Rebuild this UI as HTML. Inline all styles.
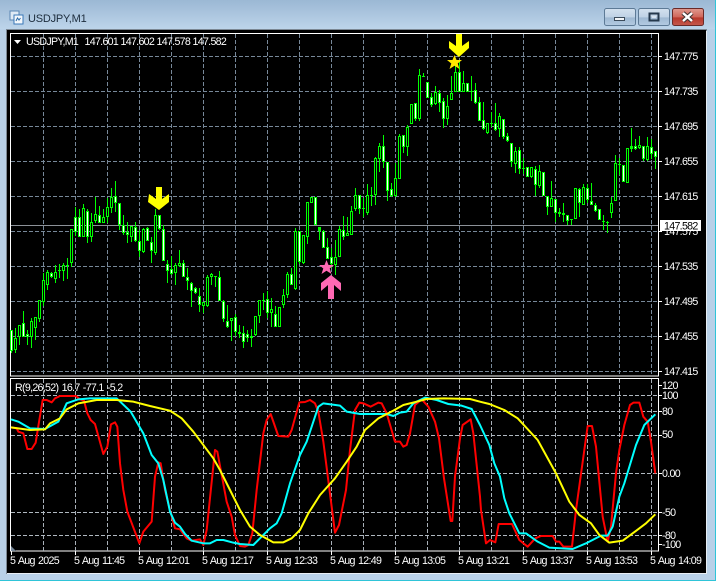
<!DOCTYPE html>
<html><head><meta charset="utf-8"><title>USDJPY,M1</title>
<style>
html,body{margin:0;padding:0;background:#b9d1e8;width:716px;height:581px;overflow:hidden}
svg{display:block}
text{font-family:"Liberation Sans",sans-serif;font-size:10.67px;letter-spacing:-.7px;word-spacing:1px;fill:#fff}
.c{shape-rendering:crispEdges;fill:none}
</style></head><body>
<svg width="716" height="581" viewBox="0 0 716 581" xmlns="http://www.w3.org/2000/svg">
<defs>
<linearGradient id="tb" x1="0" y1="0" x2="0" y2="1"><stop offset="0" stop-color="#9bb8d4"/><stop offset="1" stop-color="#bdd4ea"/></linearGradient>
<linearGradient id="btn" x1="0" y1="0" x2="0" y2="1"><stop offset="0" stop-color="#d3e1ef"/><stop offset=".5" stop-color="#bfd2e5"/><stop offset=".55" stop-color="#9fb9d2"/><stop offset="1" stop-color="#b4cbe2"/></linearGradient>
<linearGradient id="cls" x1="0" y1="0" x2="0" y2="1"><stop offset="0" stop-color="#e09a90"/><stop offset=".5" stop-color="#d0665a"/><stop offset=".55" stop-color="#b8382c"/><stop offset="1" stop-color="#c4584c"/></linearGradient>
</defs>
<rect width="716" height="581" fill="#b9d1e8"/>
<rect width="716" height="29" fill="url(#tb)"/>
<rect x="715" y="0" width="1" height="581" fill="#2fc4d8"/>
<rect x="0" y="580" width="716" height="1" fill="#2fc4d8"/>
<!-- frame -->
<rect x="6" y="29" width="701" height="545" fill="#e8eef4"/>
<rect x="6" y="29" width="701" height="2" fill="#7c8894"/>
<rect x="6" y="29" width="1" height="545" fill="#7c8894"/>
<rect x="7" y="30" width="699" height="543" fill="#000"/>
<!-- title -->
<rect x="10" y="11" width="9" height="9" fill="#dfeaf5" stroke="#5a86b4"/>
<rect x="14" y="15" width="9" height="9" fill="#f4f8fc" stroke="#3a78b8"/>
<path d="M16 21l1.500-3 1.500 2 1.500-2" fill="none" stroke="#2a6aa8"/>
<text x="28" y="22" style="font-size:11px;letter-spacing:-.2px;fill:#1c2c3c">USDJPY,M1</text>
<!-- buttons -->
<rect x="604.500" y="8.500" width="31" height="17" rx="2" fill="url(#btn)" stroke="#5d7a96"/>
<rect x="614.500" y="17.500" width="10" height="3" fill="#f2f5f8" stroke="#3c4c5c"/>
<rect x="638.500" y="8.500" width="31" height="17" rx="2" fill="url(#btn)" stroke="#5d7a96"/>
<rect x="649.500" y="13.500" width="9" height="7" fill="none" stroke="#24384c" stroke-width="2"/>
<rect x="652" y="16" width="4" height="2" fill="#d8e4f0"/>
<rect x="672.500" y="8.500" width="31" height="17" rx="2" fill="url(#cls)" stroke="#6a2a28"/>
<path d="M683 13l9 8M692 13l-9 8" stroke="#3c3030" stroke-width="4.500"/>
<path d="M683 13l9 8M692 13l-9 8" stroke="#fff" stroke-width="2.500"/>
<!-- panes -->
<rect x="10.500" y="33.500" width="648" height="342.500" fill="#000" stroke="#fff"/>
<rect x="10.500" y="378.500" width="648" height="172.500" fill="#000" stroke="#fff"/>
<!-- grid main -->
<path class="c" stroke="#778899" stroke-dasharray="4 2" d="M43.500 34V376M75.500 34V376M107.500 34V376M139.500 34V376M171.500 34V376M203.500 34V376M235.500 34V376M267.500 34V376M299.500 34V376M331.500 34V376M363.500 34V376M395.500 34V376M427.500 34V376M459.500 34V376M491.500 34V376M523.500 34V376M555.500 34V376M587.500 34V376M619.500 34V376M651.500 34V376"/>
<path class="c" stroke="#778899" stroke-dasharray="4 2" d="M11 56.500H658M11 91.500H658M11 126.500H658M11 161.500H658M11 196.500H658M11 231.500H658M11 266.500H658M11 301.500H658M11 336.500H658M11 371.500H658"/>
<!-- grid sub -->
<path class="c" stroke="#a8b0b8" stroke-dasharray="4 2" d="M43.500 379V551M75.500 379V551M107.500 379V551M139.500 379V551M171.500 379V551M203.500 379V551M235.500 379V551M267.500 379V551M299.500 379V551M331.500 379V551M363.500 379V551M395.500 379V551M427.500 379V551M459.500 379V551M491.500 379V551M523.500 379V551M555.500 379V551M587.500 379V551M619.500 379V551M651.500 379V551"/>
<path class="c" stroke="#b0b8c0" stroke-dasharray="4 2" d="M11 395.500H658M11 411.500H658M11 435.500H658M11 473.500H658M11 512.500H658M11 535.500H658"/>
<!-- price line -->
<path class="c" stroke="#8c9198" d="M11 225.500H658"/>
<!-- wicks -->
<path class="c" stroke="#00ff00" d="M11.500 330V353M15.500 328V353M19.500 325V345M23.500 311V337M27.500 330V345M31.500 318V348M35.500 317V340M39.500 300V322M43.500 273V306M47.500 270V290M51.500 272V278M55.500 265V283M59.500 264V278M63.500 263V281M67.500 258V279M71.500 229V267M75.500 207V236M79.500 209V237M83.500 204V237M87.500 209V243M91.500 213V242M95.500 197V223M99.500 206V223M103.500 209V223M107.500 198V223M111.500 188V213M115.500 181V212M119.500 203V230M123.500 215V235M127.500 222V243M131.500 226V242M135.500 222V242M139.500 230V257M143.500 228V253M147.500 227V241M151.500 237V263M155.500 209V255M159.500 215V230M163.500 225V261M167.500 260V283M171.500 256V275M175.500 263V285M179.500 250V267M183.500 260V277M187.500 268V290M191.500 282V307M195.500 287V294M199.500 288V312M203.500 302V313M207.500 275V307M211.500 273V285M215.500 276V287M219.500 271V301M223.500 300V322M227.500 305V328M231.500 318V341M235.500 314V336M239.500 325V338M243.500 326V348M247.500 330V342M251.500 329V347M255.500 316V336M259.500 300V323M263.500 293V310M267.500 291V318M271.500 298V327M275.500 306V327M279.500 307V327M283.500 289V308M287.500 272V298M291.500 268V285M295.500 228V290M299.500 231V264M303.500 235V264M307.500 202V244M311.500 197V203M315.500 197V225M319.500 227V240M323.500 230V248M327.500 238V259M331.500 248V268M335.500 240V275M339.500 226V257M343.500 216V240M347.500 217V236M351.500 206V235M355.500 188V211M359.500 195V214M363.500 198V217M367.500 184V215M371.500 187V206M375.500 157V205M379.500 143V172M383.500 135V168M387.500 162V201M391.500 183V197M395.500 163V197M399.500 134V179M403.500 135V153M407.500 125V156M411.500 104V124M415.500 103V121M419.500 69V121M423.500 73V77M427.500 82V98M431.500 93V107M435.500 86V105M439.500 90V112M443.500 98V128M447.500 95V125M451.500 76V100M455.500 62V92M459.500 60V92M463.500 71V92M467.500 83V92M471.500 76V101M475.500 83V104M479.500 97V121M483.500 102V130M487.500 123V134M491.500 112V127M495.500 103V131M499.500 113V137M503.500 119V139M507.500 133V142M511.500 143V167M515.500 147V173M519.500 147V174M523.500 158V174M527.500 167V177M531.500 167V178M535.500 166V196M539.500 165V188M543.500 172V196M547.500 196V215M551.500 181V207M555.500 199V222M559.500 208V217M563.500 203V222M567.500 215V225M571.500 219V225M575.500 188V219M579.500 188V217M583.500 184V205M587.500 184V203M591.500 183V205M595.500 203V212M599.500 209V220M603.500 215V230M607.500 221V233M611.500 197V218M615.500 155V201M619.500 158V175M623.500 165V182M627.500 148V183M631.500 128V152M635.500 139V150M639.500 136V149M643.500 146V161M647.500 137V161M651.500 139V159M655.500 151V169"/>
<!-- bodies -->
<path class="c" stroke="#00ff00" stroke-width="3" d="M11.500 330V351M15.500 338V350M19.500 325V337M23.500 323V337M27.500 334V337M31.500 321V337M35.500 317V328M39.500 300V319M43.500 280V302M47.500 272V285M51.500 273V277M55.500 272V279M59.500 270V271M63.500 265V271M67.500 265V266M71.500 229V263M75.500 217V232M79.500 217V237M83.500 208V237M87.500 211V237M91.500 222V237M95.500 214V221M99.500 215V223M103.500 217V223M107.500 207V217M111.500 197V208M115.500 196V203M119.500 203V225M123.500 225V233M127.500 232V235M131.500 226V237M135.500 227V241M139.500 241V251M143.500 229V252M147.500 228V241M151.500 242V251M155.500 215V253M159.500 215V229M163.500 229V261M167.500 264V271M171.500 269V274M175.500 265V273M179.500 263V266M183.500 263V277M187.500 277V281M191.500 283V291M195.500 288V293M199.500 296V305M203.500 302V306M207.500 277V306M211.500 274V277M215.500 276V277M219.500 277V301M223.500 301V319M227.500 321V327M231.500 318V321M235.500 317V332M239.500 332V334M243.500 333V342M247.500 334V338M251.500 336V338M255.500 316V335M259.500 300V316M263.500 300V301M267.500 299V313M271.500 309V313M275.500 314V327M279.500 307V327M283.500 295V305M287.500 274V295M291.500 274V285M295.500 231V289M299.500 231V262M303.500 235V263M307.500 202V237M311.500 197V203M315.500 197V225M319.500 227V231M323.500 231V248M327.500 247V259M331.500 257V264M335.500 257V265M339.500 229V257M343.500 230V237M347.500 233V236M351.500 211V235M355.500 195V209M359.500 195V209M363.500 208V209M367.500 195V213M371.500 195V196M375.500 158V195M379.500 146V159M383.500 146V162M387.500 162V191M391.500 189V196M395.500 178V196M399.500 136V179M403.500 135V147M407.500 127V147M411.500 104V124M415.500 103V119M419.500 75V119M423.500 76V77M427.500 82V98M431.500 97V105M435.500 92V104M439.500 93V103M443.500 101V119M447.500 106V119M451.500 93V100M455.500 72V92M459.500 72V92M463.500 83V92M467.500 83V92M471.500 91V92M475.500 90V103M479.500 102V121M483.500 120V129M487.500 123V133M491.500 123V124M495.500 123V130M499.500 116V129M503.500 119V137M507.500 136V141M511.500 143V162M515.500 151V164M519.500 150V169M523.500 168V169M527.500 167V177M531.500 167V177M535.500 169V185M539.500 171V186M543.500 172V196M547.500 196V207M551.500 198V207M555.500 199V213M559.500 212V214M563.500 213V215M567.500 215V221M571.500 219V220M575.500 188V219M579.500 189V203M583.500 187V205M587.500 188V200M591.500 201V205M595.500 205V211M599.500 209V220M603.500 221V222M607.500 222V223M611.500 203V213M615.500 163V201M619.500 164V165M623.500 165V182M627.500 148V183M631.500 146V149M635.500 146V149M639.500 145V148M643.500 146V159M647.500 146V160M651.500 147V154M655.500 151V157"/>
<!-- white centres -->
<path class="c" stroke="#ffffff" d="M11.500 331V350M23.500 324V336M27.500 335V336M51.500 274V276M75.500 218V231M79.500 218V236M87.500 212V236M99.500 216V222M115.500 197V202M119.500 204V224M123.500 226V232M127.500 233V234M135.500 228V240M139.500 242V250M147.500 229V240M151.500 243V250M159.500 216V228M163.500 230V260M167.500 265V270M171.500 270V273M183.500 264V276M187.500 278V280M191.500 284V290M195.500 289V292M199.500 297V304M219.500 278V300M223.500 302V318M227.500 322V326M235.500 318V331M243.500 334V341M247.500 335V337M267.500 300V312M275.500 315V326M291.500 275V284M299.500 232V261M315.500 198V224M323.500 232V247M327.500 248V258M331.500 258V263M343.500 231V236M359.500 196V208M383.500 147V161M387.500 163V190M391.500 190V195M403.500 136V146M415.500 104V118M427.500 83V97M431.500 98V104M439.500 94V102M443.500 102V118M459.500 73V91M467.500 84V91M475.500 91V102M479.500 103V120M483.500 121V128M495.500 124V129M503.500 120V136M507.500 137V140M511.500 144V161M519.500 151V168M527.500 168V176M535.500 170V184M543.500 173V195M547.500 197V206M555.500 200V212M567.500 216V220M579.500 190V202M587.500 189V199M591.500 202V204M595.500 206V210M599.500 210V219M623.500 166V181M635.500 147V148M643.500 147V158M651.500 148V153M655.500 152V156"/>
<!-- hollow centres -->
<path class="c" stroke="#000000" d="M15.500 339V349M19.500 326V336M31.500 322V336M35.500 318V327M39.500 301V318M43.500 281V301M47.500 273V284M55.500 273V278M63.500 266V270M71.500 230V262M83.500 209V236M91.500 223V236M95.500 215V220M103.500 218V222M107.500 208V216M111.500 198V207M131.500 227V236M143.500 230V251M155.500 216V252M175.500 266V272M179.500 264V265M203.500 303V305M207.500 278V305M211.500 275V276M231.500 319V320M255.500 317V334M259.500 301V315M271.500 310V312M279.500 308V326M283.500 296V304M287.500 275V294M295.500 232V288M303.500 236V262M307.500 203V236M311.500 198V202M335.500 258V264M339.500 230V256M347.500 234V235M351.500 212V234M355.500 196V208M367.500 196V212M375.500 159V194M379.500 147V158M395.500 179V195M399.500 137V178M407.500 128V146M411.500 105V123M419.500 76V118M435.500 93V103M447.500 107V118M451.500 94V99M455.500 73V91M463.500 84V91M487.500 124V132M499.500 117V128M515.500 152V163M531.500 168V176M539.500 172V185M551.500 199V206M575.500 189V218M583.500 188V204M611.500 204V212M615.500 164V200M627.500 149V182M639.500 146V147M647.500 147V159"/>
<!-- arrows and stars -->
<polygon points="159,210 148,202 149,194 156,199 156,187 162,187 162,199 169,194 169,202" fill="#ffff00"/>
<polygon points="459,57 449,48 449,41 456,46 456,34 462,34 462,46 469,41 469,48" fill="#ffff00"/>
<polygon points="454.500,55 456.500,60 462,60 457.700,63.500 459.500,69 454.500,65.800 449.500,69 451.300,63.500 447,60 452.500,60" fill="#ffe600"/>
<polygon points="326.500,260 328.500,265 334,265 329.700,268.500 331.500,274 326.500,270.800 321.500,274 323.300,268.500 319,265 324.500,265" fill="#ff69b4"/>
<polygon points="331,275 341,283 341,291 334,285 334,299 328,299 328,285 321,291 321,283" fill="#ff69b4"/>
<!-- sub lines -->
<g transform="translate(0,370) scale(.33333)" fill="none" stroke-width="6" stroke-linejoin="round">
<polyline stroke="#ff0000" points="33,172 50,175 55,185 70,190 82,237 95,237 107,218 118,150 128,90 140,90 155,97 165,85 180,78 228,78 240,88 252,92 262,130 272,150 285,162 310,252 322,230 333,163 345,157 352,170 360,280 370,360 382,425 418,520 430,485 455,455 465,320 475,277 482,280 495,360 510,420 525,475 540,478 560,505 575,512 600,508 610,525 620,480 645,240 652,245 680,395 695,440 705,495 720,528 735,530 745,525 757,490 770,360 790,190 800,150 812,132 835,198 865,200 875,180 898,97 915,96 930,90 945,100 955,125 970,215 1005,488 1017,465 1038,360 1050,240 1065,120 1078,98 1090,100 1112,110 1135,98 1145,100 1160,130 1185,215 1200,215 1210,230 1220,225 1230,190 1245,105 1265,88 1285,110 1305,155 1317,205 1332,325 1352,453 1357,453 1365,320 1380,205 1388,165 1412,148 1420,190 1440,380 1443,420 1458,520 1470,510 1486,517 1496,462 1536,462 1558,510 1583,530 1606,505 1623,498 1658,498 1668,515 1678,515 1690,530 1716,530 1728,420 1763,168 1776,168 1788,230 1808,440 1823,515 1833,470 1848,310 1858,240 1873,165 1890,105 1900,98 1918,98 1930,140 1943,155 1953,215 1966,310"/>
<polyline stroke="#00ffff" points="33,148 55,155 90,175 135,177 175,155 200,100 235,88 270,85 350,85 392,125 430,190 455,255 475,280 490,330 510,425 525,458 540,470 555,492 575,512 610,520 630,520 650,510 670,510 700,518 720,522 760,525 780,505 810,475 830,460 845,430 870,340 900,255 920,215 955,110 970,100 1020,107 1040,125 1080,132 1160,132 1180,138 1200,128 1220,125 1240,100 1275,83 1310,90 1345,102 1385,107 1415,117 1440,165 1468,225 1483,280 1500,320 1513,385 1528,430 1558,490 1578,490 1613,515 1648,533 1718,537 1758,520 1803,497 1823,497 1838,470 1858,380 1873,340 1908,225 1933,165 1966,133"/>
<polyline stroke="#ffff00" points="33,172 90,180 135,178 150,160 180,145 200,118 235,100 290,90 350,90 400,95 450,108 510,122 545,145 580,185 640,265 660,300 690,360 720,420 750,470 780,495 820,517 850,517 875,505 900,480 925,430 960,375 1005,325 1040,275 1070,230 1095,180 1135,145 1180,122 1210,105 1250,95 1280,87 1330,85 1410,87 1440,95 1468,102 1513,120 1553,145 1613,210 1668,310 1708,395 1738,435 1773,460 1798,495 1828,518 1868,512 1898,490 1938,460 1966,433"/>
</g>
<polygon points="11,546 11,551 16,551" fill="#778899"/>
<!-- ticks -->
<path class="c" stroke="#fff" d="M659 56.500H662M659 91.500H662M659 126.500H662M659 161.500H662M659 196.500H662M659 231.500H662M659 266.500H662M659 301.500H662M659 336.500H662M659 371.500H662M659 385.500H662M659 395.500H662M659 411.500H662M659 435.500H662M659 473.500H662M659 512.500H662M659 535.500H662M659 544.500H662M11.500 551V555M75.500 551V555M139.500 551V555M203.500 551V555M267.500 551V555M331.500 551V555M395.500 551V555M459.500 551V555M523.500 551V555M587.500 551V555M651.500 551V555"/>
<!-- legend -->
<polygon points="14,40 21,40 17.500,44" fill="#fff"/>
<text x="26" y="45">USDJPY,M1</text>
<text x="84.500" y="45">147.601</text><text x="120.500" y="45">147.602</text><text x="156.500" y="45">147.578</text><text x="192.500" y="45">147.582</text>
<text x="15" y="391">R(9,26,52) 16.7 -77.1 -5.2</text>
<!-- price axis -->
<text x="664" y="60">147.775</text><text x="664" y="95">147.735</text><text x="664" y="130">147.695</text><text x="664" y="165">147.655</text><text x="664" y="200">147.615</text><text x="664" y="235">147.575</text><text x="664" y="270">147.535</text><text x="664" y="305">147.495</text><text x="664" y="340">147.455</text><text x="664" y="375">147.415</text>
<rect x="660" y="220" width="41" height="11" fill="#fff"/>
<text x="664" y="229.500" style="fill:#000">147.582</text>
<!-- indicator axis -->
<text x="662" y="389">120</text><text x="662" y="399">100</text><text x="662" y="415">80</text><text x="662" y="438">50</text><text x="662" y="477">0.00</text><text x="662" y="516">-50</text><text x="662" y="539">-80</text><text x="662" y="548">-100</text>
<!-- time axis -->
<text x="10" y="564">5 Aug 2025</text><text x="74" y="564">5 Aug 11:45</text><text x="138" y="564">5 Aug 12:01</text><text x="202" y="564">5 Aug 12:17</text><text x="266" y="564">5 Aug 12:33</text><text x="330" y="564">5 Aug 12:49</text><text x="394" y="564">5 Aug 13:05</text><text x="458" y="564">5 Aug 13:21</text><text x="522" y="564">5 Aug 13:37</text><text x="586" y="564">5 Aug 13:53</text><text x="650" y="564">5 Aug 14:09</text>
</svg>
</body></html>
